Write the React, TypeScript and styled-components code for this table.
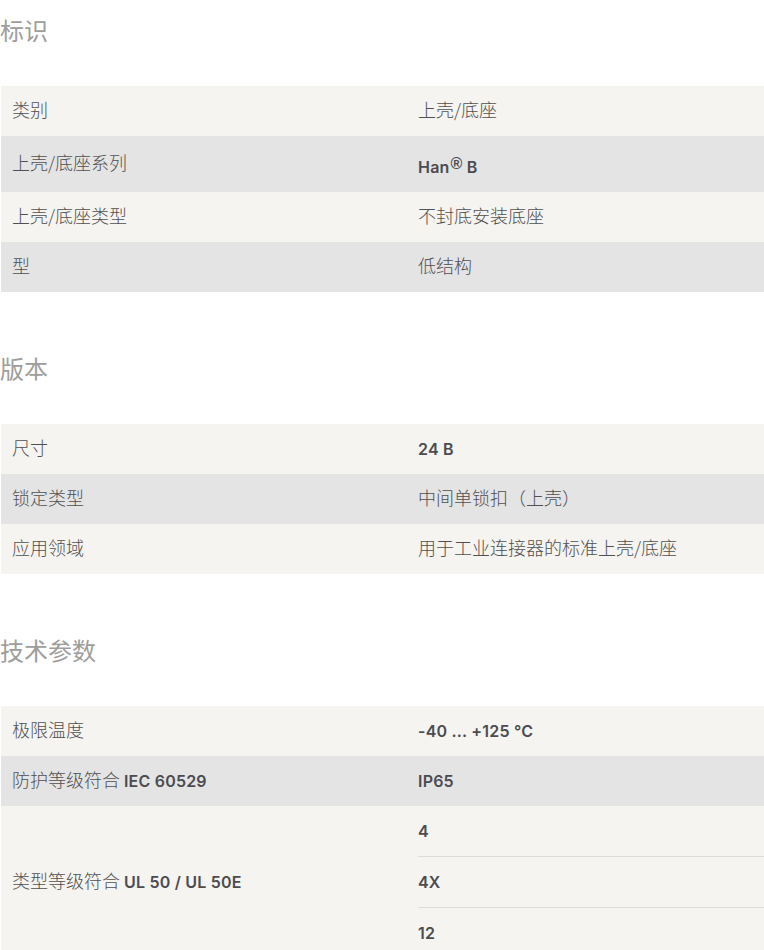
import React from "react";
import styled, { createGlobalStyle } from "styled-components";

const GlobalStyle = createGlobalStyle`
  html, body {
    margin: 0;
    padding: 0;
    background: #ffffff;
  }
  body {
    font-family: "Inter", "Noto Sans CJK SC", sans-serif;
    color: #4b4b50;
  }
`;

const Page = styled.div`
  padding-top: 12px;
`;

const Section = styled.section`
  & + & {
    margin-top: 58px;
  }
`;

const Title = styled.h2`
  margin: 0 0 38px;
  font-family: "Noto Sans CJK SC", sans-serif;
  font-size: 24px;
  line-height: 36px;
  font-weight: 400;
  color: #9d9d9b;
`;

const Table = styled.div`
  margin-left: 1px;
  display: flex;
  flex-direction: column;
`;

const Row = styled.div<{ $shade: boolean }>`
  display: grid;
  grid-template-columns: 417px 1fr;
  background: ${(p) => (p.$shade ? "#e4e4e4" : "#f5f4f0")};
`;

const Label = styled.div`
  align-self: center;
  padding: 0 11px;
  line-height: 24px;
`;

const Values = styled.div`
  display: flex;
  flex-direction: column;
`;

const Value = styled.div`
  padding: 13px 0;
  line-height: 24px;
  & + & {
    border-top: 1px solid #dcdbd7;
  }
`;

const Cjk = styled.span`
  font-family: "Noto Sans CJK SC", sans-serif;
  font-size: 18px;
  line-height: 18px;
  font-weight: 300;
  color: #505052;
`;

const Latin = styled.span`
  font-family: "Inter", sans-serif;
  font-size: 16px;
  font-weight: 600;
  letter-spacing: 0.2px;
`;

const Sup = styled.sup`
  font-family: "Liberation Sans", sans-serif;
  font-size: 16px;
  font-weight: 700;
  line-height: 30px;
  vertical-align: 4px;
  margin-left: 1px;
`;

interface IRow {
  label: string;
  values: string[];
}

interface ISection {
  title: string;
  rows: IRow[];
}

const sections: ISection[] = [
  {
    title: "标识",
    rows: [
      { label: "类别", values: ["上壳/底座"] },
      { label: "上壳/底座系列", values: ["Han® B"] },
      { label: "上壳/底座类型", values: ["不封底安装底座"] },
      { label: "型", values: ["低结构"] },
    ],
  },
  {
    title: "版本",
    rows: [
      { label: "尺寸", values: ["24 B"] },
      { label: "锁定类型", values: ["中间单锁扣（上壳）"] },
      { label: "应用领域", values: ["用于工业连接器的标准上壳/底座"] },
    ],
  },
  {
    title: "技术参数",
    rows: [
      { label: "极限温度", values: ["-40 ... +125 °C"] },
      { label: "防护等级符合 IEC 60529", values: ["IP65"] },
      { label: "类型等级符合 UL 50 / UL 50E", values: ["4", "4X", "12"] },
    ],
  },
];

const CJK = /[\u3000-\u9fff\uff00-\uffef]/;

// cjk runs stay thin, latin runs are semibold; a space next to cjk goes to the cjk run
function Text({ text }: { text: string }) {
  const parts = text.match(/[\u3000-\u9fff\uff00-\uffef]+ ?|[^\u3000-\u9fff\uff00-\uffef]+/g) || [];
  return (
    <>
      {parts.map((part, i) => {
        if (CJK.test(part) || !/[A-Za-z0-9]/.test(part)) {
          return <Cjk key={i}>{part}</Cjk>;
        }
        if (part.includes("®")) {
          const [before, after] = part.split("®");
          return (
            <Latin key={i}>
              {before}
              <Sup>®</Sup>
              {after}
            </Latin>
          );
        }
        return <Latin key={i}>{part}</Latin>;
      })}
    </>
  );
}

export default function App() {
  return (
    <Page>
      <GlobalStyle />
      {sections.map((section) => (
        <Section key={section.title}>
          <Title>{section.title}</Title>
          <Table>
            {section.rows.map((row, index) => (
              <Row key={row.label} $shade={index % 2 === 1}>
                <Label>
                  <Text text={row.label} />
                </Label>
                <Values>
                  {row.values.map((value) => (
                    <Value key={value}>
                      <Text text={value} />
                    </Value>
                  ))}
                </Values>
              </Row>
            ))}
          </Table>
        </Section>
      ))}
    </Page>
  );
}
